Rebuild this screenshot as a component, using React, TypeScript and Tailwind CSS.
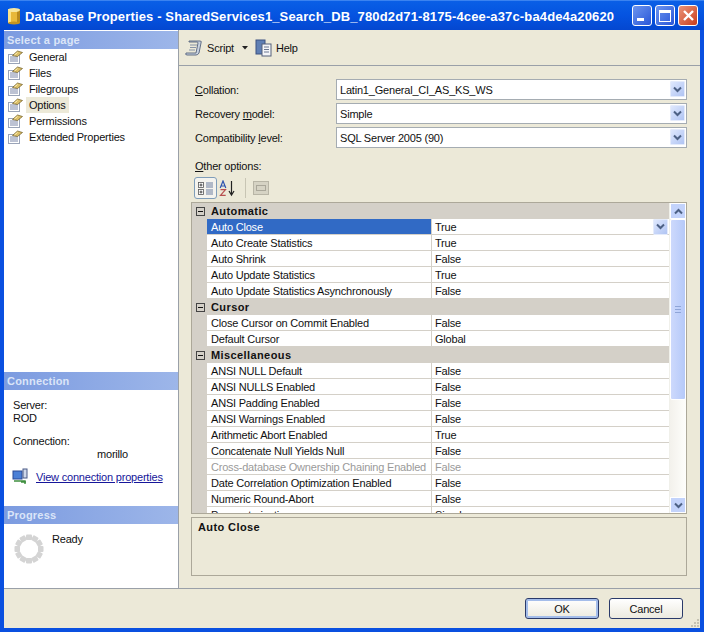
const pages = ["General", "Files", "Filegroups", "Options", "Permissions", "Extended Properties"];

type Row = [string, string, boolean?];
const groups: { name: string; rows: Row[] }[] = [
  {
    name: "Automatic",
    rows: [
      ["Auto Close", "True"],
      ["Auto Create Statistics", "True"],
      ["Auto Shrink", "False"],
      ["Auto Update Statistics", "True"],
      ["Auto Update Statistics Asynchronously", "False"],
    ],
  },
  {
    name: "Cursor",
    rows: [
      ["Close Cursor on Commit Enabled", "False"],
      ["Default Cursor", "Global"],
    ],
  },
  {
    name: "Miscellaneous",
    rows: [
      ["ANSI NULL Default", "False"],
      ["ANSI NULLS Enabled", "False"],
      ["ANSI Padding Enabled", "False"],
      ["ANSI Warnings Enabled", "False"],
      ["Arithmetic Abort Enabled", "True"],
      ["Concatenate Null Yields Null", "False"],
      ["Cross-database Ownership Chaining Enabled", "False", true],
      ["Date Correlation Optimization Enabled", "False"],
      ["Numeric Round-Abort", "False"],
      ["Parameterization", "Simple"],
    ],
  },
];

function Chevron({ up = false, color = "#4d6185" }: { up?: boolean; color?: string }) {
  return (
    <svg width="9" height="7" viewBox="0 0 9 7" className="block">
      <path d={up ? "M1 5.5 L4.5 2 L8 5.5" : "M1 1.5 L4.5 5 L8 1.5"} fill="none" stroke={color} strokeWidth="2" />
    </svg>
  );
}

function ComboButton({ up = false }: { up?: boolean }) {
  return (
    <div className="w-[15px] h-[16px] shrink-0 flex items-center justify-center rounded-[1px] border border-[#e4ebfb] bg-gradient-to-br from-[#dfe8fd] to-[#b0c4f3]">
      <Chevron up={up} />
    </div>
  );
}

function Combo({ mnemonic, pre, post, value }: { mnemonic: string; pre: string; post: string; value: string }) {
  return (
    <div className="flex items-center h-[20px] mb-[4px]">
      <div className="w-[157px] pl-[16px] pt-px shrink-0">
        {pre}
        <span className="underline">{mnemonic}</span>
        {post}
      </div>
      <div className="w-[351px] h-[21px] border border-[#a5acb2] bg-white flex items-center justify-between pl-[3px] pr-px">
        <span className="pt-px">{value}</span>
        <ComboButton />
      </div>
    </div>
  );
}

function PageIcon() {
  return (
    <svg width="16" height="16" viewBox="0 0 16 16" className="shrink-0">
      <rect x="1.5" y="5.5" width="11" height="9" fill="#fff" stroke="#9aa4b8" />
      <path d="M3 8h8M3 10h8M3 12h8" stroke="#7a86a8" strokeWidth="1" />
      <path d="M5.5 6.5 L10.5 2 L15.5 3.5 L10.5 7.5 Z" fill="#dcc06a" stroke="#6d5a22" strokeWidth="0.7" />
      <path d="M7.5 6l3-2.5" stroke="#fff2b8" />
    </svg>
  );
}

function SectionHead({ text }: { text: string }) {
  return (
    <div className="h-[18px] shrink-0 bg-gradient-to-r from-[#7c9be0] to-[#9db6e9] text-[#dbe5f8] font-bold text-[11px] leading-[18px] pl-[3px] tracking-[0.2px]">
      {text}
    </div>
  );
}

function PlusBox({ y }: { y: number }) {
  return (
    <g>
      <rect x="1.5" y={y + 0.5} width="5" height="5" fill="#fff" stroke="#555" strokeWidth="0.8" />
      <path d={`M4 ${y + 1.5}v3M2.5 ${y + 3}h3`} stroke="#222" strokeWidth="0.8" />
    </g>
  );
}

function Spinner() {
  const dots = Array.from({ length: 12 }, (_, i) => (i * 360) / 12);
  return (
    <svg width="32" height="32" viewBox="0 0 32 32">
      {dots.map((d) => (
        <rect key={d} x="13" y="1.5" width="6" height="5.5" rx="1" fill="#d4d4d4" transform={`rotate(${d} 16 16)`} />
      ))}
    </svg>
  );
}

export default function App() {
  return (
    <div className="[font-family:Liberation_Sans,Arial,sans-serif] w-[704px] h-[632px] overflow-hidden flex flex-col bg-[#0a50e0] text-[11px] tracking-[-0.2px] leading-[16px] text-[#111]">
      {/* Title bar */}
      <div className="h-[30px] shrink-0 flex items-center pl-[7px] pr-[6px] bg-gradient-to-b from-[#0a5fe6] via-[#0553e0] to-[#0447d0] border-t border-[#3b83f0]">
        <svg width="14" height="18" viewBox="0 0 14 18" className="shrink-0">
          <rect x="1" y="2" width="12" height="14" fill="#e8b83a" />
          <rect x="1" y="2" width="3" height="14" fill="#fbe38a" />
          <rect x="10" y="2" width="3" height="14" fill="#b98a1e" />
          <ellipse cx="7" cy="3" rx="6" ry="2" fill="#f7e7a0" />
          <ellipse cx="7" cy="16" rx="6" ry="1.5" fill="#c4931f" />
        </svg>
        <div className="ml-[4px] pt-[2px] text-white font-bold text-[13px] tracking-[0.14px] whitespace-nowrap flex-1 min-w-0 overflow-hidden">
          Database Properties - SharedServices1_Search_DB_780d2d71-8175-4cee-a37c-ba4de4a20620
        </div>
        <div className="flex gap-[3px] shrink-0">
          <div className="w-[20px] h-[21px] rounded-[3px] border border-white bg-gradient-to-br from-[#6d94ee] to-[#2a55d8] flex items-end pl-[4px] pb-[4px]">
            <div className="w-[7px] h-[3px] bg-white" />
          </div>
          <div className="w-[20px] h-[21px] rounded-[3px] border border-white bg-gradient-to-br from-[#6d94ee] to-[#2a55d8] flex items-center justify-center">
            <div className="w-[12px] h-[12px] border border-white border-t-[3px]" />
          </div>
          <div className="w-[20px] h-[21px] rounded-[3px] border border-white bg-gradient-to-br from-[#ea9378] to-[#c93a16] flex items-center justify-center">
            <svg width="13" height="13" viewBox="0 0 13 13">
              <path d="M2 2 L11 11 M11 2 L2 11" stroke="#fff" strokeWidth="2.4" />
            </svg>
          </div>
        </div>
      </div>

      {/* Body */}
      <div className="flex-1 min-h-0 mx-[4px] mb-[4px] bg-[#ece9d8] flex flex-col">
        <div className="flex-1 min-h-0 flex">
          {/* Left */}
          <div className="w-[175px] shrink-0 bg-white border-r border-[#9aa0a8] flex flex-col pt-px">
            <SectionHead text="Select a page" />
            <div className="h-[323px]">
              {pages.map((p) => (
                <div key={p} className="h-[16px] flex items-center pl-[3px] gap-[3px]">
                  <PageIcon />
                  <span className={p === "Options" ? "bg-[#ece9d8] px-[3px]" : "px-[3px]"}>{p}</span>
                </div>
              ))}
            </div>
            <SectionHead text="Connection" />
            <div className="h-[116px] pl-[9px] pt-[9px]">
              <div className="h-[13px] leading-[13px]">Server:</div>
              <div className="h-[13px] leading-[13px]">ROD</div>
              <div className="mt-[10px] h-[13px] leading-[13px]">Connection:</div>
              <div className="pl-[84px] h-[13px] leading-[13px]">morillo</div>
              <div className="flex items-center mt-[7px] -ml-px gap-[7px] whitespace-nowrap">
                <svg width="17" height="17" viewBox="0 0 17 17" className="shrink-0">
                  <rect x="1" y="3" width="9" height="8" fill="#4a7fd6" stroke="#2a4a96" />
                  <rect x="11" y="1" width="4" height="9" fill="#cfd8ea" stroke="#4a5a86" />
                  <path d="M2 13h11v3M9 14h5" stroke="#3f8f3f" strokeWidth="1.4" fill="none" />
                </svg>
                <span className="text-[#16169a] underline">View connection properties</span>
              </div>
            </div>
            <SectionHead text="Progress" />
            <div className="flex-1 flex pl-[9px] pt-[7px]">
              <div className="mt-[2px]">
                <Spinner />
              </div>
              <div className="ml-[7px]">Ready</div>
            </div>
          </div>

          {/* Right */}
          <div className="flex-1 min-w-0 flex flex-col">
            <div className="h-[36px] shrink-0 border-b border-[#9aa0a8] flex items-center pl-[6px]">
              <svg width="18" height="18" viewBox="0 0 18 18" className="shrink-0">
                <path d="M4 2 H15 Q17 2 16 4 L14 14 Q13 16 11 16 H2 Q0 16 1 14 H11 L13 4 Q13 3 12 3 H4 Z" fill="#c8d2e0" stroke="#56627c" strokeWidth="0.9" />
                <path d="M5 6h7M5 8.5h6M4 11h6" stroke="#7c88a2" strokeWidth="0.9" />
              </svg>
              <span className="ml-[4px]">Script</span>
              <svg width="6" height="4" viewBox="0 0 6 4" className="ml-[8px]">
                <path d="M0 0h6L3 3.5z" fill="#222" />
              </svg>
              <svg width="17" height="18" viewBox="0 0 17 18" className="ml-[7px] shrink-0">
                <rect x="1" y="1" width="9" height="14" fill="#5f7fb4" stroke="#3d5280" />
                <rect x="7" y="5" width="9" height="12" fill="#f4f5f8" stroke="#55607a" />
                <path d="M9 8h5M9 10.5h5M9 13h5" stroke="#6c7892" />
              </svg>
              <span className="ml-[4px]">Help</span>
            </div>

            <div className="flex-1 min-h-0 flex flex-col pt-[13px]">
              <Combo mnemonic="C" pre="" post="ollation:" value="Latin1_General_CI_AS_KS_WS" />
              <Combo mnemonic="m" pre="Recovery " post="odel:" value="Simple" />
              <Combo mnemonic="l" pre="Compatibility " post="evel:" value="SQL Server 2005 (90)" />

              <div className="pl-[16px] mt-[7px] h-[16px]">
                <span className="underline">O</span>ther options:
              </div>
              <div className="ml-[15px] mt-[3px] h-[22px] flex items-center">
                <div className="w-[23px] h-[22px] rounded-[3px] border border-[#7f9db9] bg-[#f4f3ee] flex items-center justify-center">
                  <svg width="17" height="15" viewBox="0 0 17 15">
                    <PlusBox y={1} />
                    <PlusBox y={8} />
                    <path d="M9 2h7M9 4h7M9 6h7M9 9h7M9 11h7M9 13h7" stroke="#6d7fa0" strokeWidth="1" />
                  </svg>
                </div>
                <div className="w-[22px] flex justify-center">
                  <svg width="18" height="17" viewBox="0 0 18 17">
                    <path d="M1.2 8L4 1L6.8 8M2.2 6h3.6" stroke="#2f55b0" strokeWidth="1.2" fill="none" />
                    <path d="M1.5 9.6h5L1.5 15.4h5.2" stroke="#b85050" strokeWidth="1.2" fill="none" />
                    <path d="M12.5 1v13M10 11l2.5 4 2.5-4" stroke="#222" strokeWidth="1.2" fill="none" />
                  </svg>
                </div>
                <div className="w-px h-[20px] bg-[#c8c5b4] mx-[6px]" />
                <div className="w-[16px] h-[14px] ml-px bg-[#d6d3c4] border border-[#b8b5a6] flex items-center justify-center">
                  <div className="w-[10px] h-[6px] border border-[#aaa79a]" />
                </div>
              </div>

              {/* Grid */}
              <div className="ml-[12px] mt-[3px] w-[496px] h-[312px] shrink-0 border border-[#aca899] bg-white flex overflow-hidden">
                <div className="flex-1 min-w-0 overflow-hidden">
                  {groups.map((g) => (
                    <div key={g.name}>
                      <div className="h-[16px] bg-[#d4d0c8] flex items-center font-bold tracking-[0.4px]">
                        <div className="w-[16px] flex justify-center shrink-0">
                          <div className="w-[9px] h-[9px] border border-[#444] flex items-center justify-center">
                            <div className="w-[5px] h-px bg-[#111]" />
                          </div>
                        </div>
                        <span className="pl-[3px]">{g.name}</span>
                      </div>
                      {g.rows.map(([n, v, dis]) => {
                        const selected = n === "Auto Close";
                        return (
                          <div key={n} className="h-[16px] flex">
                            <div className="w-[15px] shrink-0 bg-[#d4d0c8]" />
                            <div
                              className={`w-[225px] shrink-0 pl-[4px] border-r border-b whitespace-nowrap overflow-hidden ${
                                selected ? "bg-[#316ac5] text-white border-[#d4d0c8]" : dis ? "text-[#9a9a9a] border-[#d4d0c8]" : "border-[#d4d0c8]"
                              }`}
                            >
                              {n}
                            </div>
                            <div className={`flex-1 pl-[3px] border-b border-[#d4d0c8] flex justify-between items-center pr-px ${dis ? "text-[#9a9a9a]" : ""}`}>
                              <span>{v}</span>
                              {selected && <ComboButton />}
                            </div>
                          </div>
                        );
                      })}
                    </div>
                  ))}
                </div>
                {/* scrollbar */}
                <div className="w-[17px] shrink-0 flex flex-col bg-gradient-to-r from-[#f3f1ec] to-[#fefefb] border-l border-[#f0f0ea]">
                  <div className="h-[16px] flex items-center justify-center border border-white bg-[#c3d3fb]">
                    <Chevron up />
                  </div>
                  <div className="h-[181px] border border-white rounded-[2px] bg-gradient-to-r from-[#cdd9fc] to-[#b5c9f9] flex items-center justify-center">
                    <div className="w-[6px] h-[7px] border-y border-[#8fa5d8] flex items-center">
                      <div className="w-full h-px bg-[#8fa5d8]" />
                    </div>
                  </div>
                  <div className="flex-1" />
                  <div className="h-[16px] flex items-center justify-center border border-white bg-[#c3d3fb]">
                    <Chevron />
                  </div>
                </div>
              </div>

              {/* Help panel */}
              <div className="ml-[12px] mt-[3px] w-[496px] h-[59px] shrink-0 border border-[#aca899] pl-[6px] pt-[1px] font-bold tracking-[0.4px]">Auto Close</div>
            </div>
          </div>
        </div>

        {/* Footer */}
        <div className="relative h-[40px] shrink-0 border-t border-[#9aa0a8] flex items-start justify-end gap-[10px] pt-[9px] pr-[17px]">
          <button className="w-[74px] h-[21px] rounded-[3px] border border-[#2a3a6a] bg-gradient-to-b from-white to-[#eceadf] shadow-[inset_0_0_0_2px_#a4bdea]">OK</button>
          <button className="w-[74px] h-[21px] rounded-[3px] border border-[#2a3a6a] bg-gradient-to-b from-white to-[#eceadf]">Cancel</button>
          <svg width="10" height="10" viewBox="0 0 10 10" className="absolute right-0 bottom-0">
            <path d="M7 1h2v2H7zM4 4h2v2H4zM7 4h2v2H7zM1 7h2v2H1zM4 7h2v2H4zM7 7h2v2H7z" fill="#c5c2b2" />
          </svg>
        </div>
      </div>
    </div>
  );
}
